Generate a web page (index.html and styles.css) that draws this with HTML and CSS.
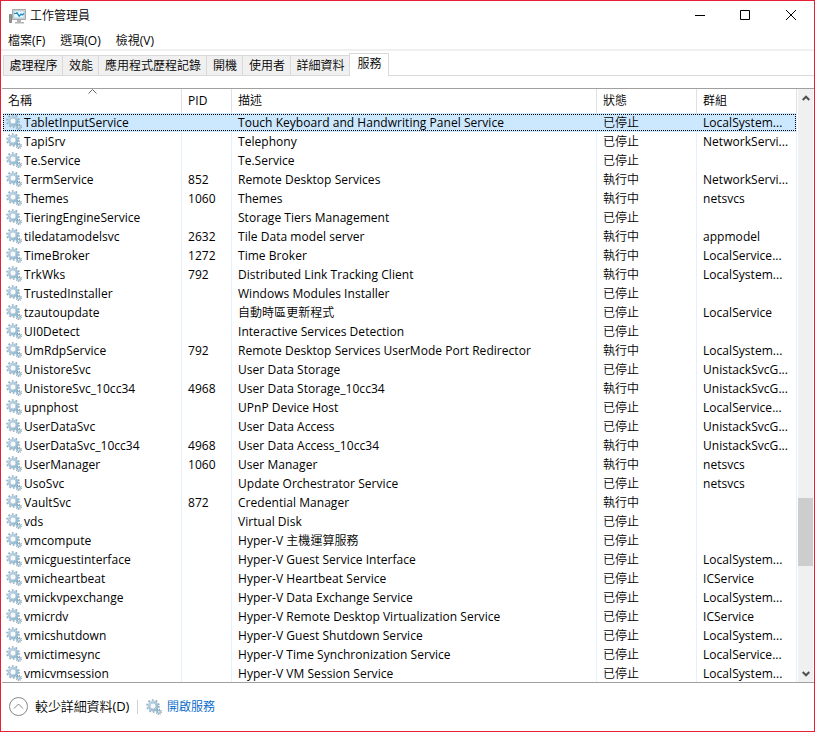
FILE: index.html
```
<!DOCTYPE html>
<html lang="zh-Hant">
<head>
<meta charset="utf-8">
<title>工作管理員</title>
<link rel="stylesheet" href="styles.css">
</head>
<body>
<svg class="defs" width="0" height="0">
  <defs>
    <linearGradient id="steel" x1="0" y1="0" x2="1" y2="1">
      <stop offset="0" stop-color="#bcd9ea"/><stop offset="1" stop-color="#8ab6d2"/>
    </linearGradient>
    <symbol id="gears" viewBox="0 0 16 16">
      <circle cx="7" cy="7" r="6" fill="none" stroke="#97adba" stroke-width="1.6" stroke-dasharray="1.800 1.970"/>
      <circle cx="7" cy="7" r="4.300" fill="none" stroke="url(#steel)" stroke-width="2.300"/>
      <circle cx="7" cy="7" r="3" fill="#f6fafc" stroke="#8ea9ba" stroke-width=".6"/>
      <circle cx="12.8" cy="12.8" r="2.6" fill="none" stroke="#8197a5" stroke-width="1.1" stroke-dasharray="1 1.040"/>
      <circle cx="12.8" cy="12.8" r="1.5" fill="#e6f1f7" stroke="#8fb5ca" stroke-width="1.200"/>
    </symbol>
  </defs>
</svg>
<div class="window">
  <header class="titlebar">
    <svg class="app-icon" width="17" height="15" viewBox="0 0 17 15">
      <path d="M.5 5.500h2v8h-2z" fill="#999" stroke="#888"/><path d="M1 7.500h1" stroke="#39c84a"/>
      <path d="M3.5.5h13v10h-13z" fill="#d3d3d3" stroke="#a9a9a9"/>
      <path d="M5 2h10v7H5z" fill="#eaf7fd" stroke="#9cc6dc" stroke-width=".6"/>
      <path d="M5 4.5h1.5L8 3.8l2.2 3.4L12 5l1.2 1L15 4.500" fill="none" stroke="#1687c4" stroke-width="1.2"/>
      <path d="M8 11h4v2H8zM6 13h9v1.500H6z" fill="#b4b4b4"/>
    </svg>
    <h1>工作管理員</h1>
    <div class="controls">
      <svg width="10" height="10" viewBox="0 0 10 10"><path d="M0 4.500h10"/></svg>
      <svg width="10" height="10" viewBox="0 0 10 10"><path d="M.5.5h9v9h-9z"/></svg>
      <svg width="10" height="10" viewBox="0 0 10 10"><path d="M0 0l10 10M10 0L0 10"/></svg>
    </div>
  </header>
  <nav class="menu"><span>檔案(F)</span><span>選項(O)</span><span>檢視(V)</span></nav>
  <div class="tabs">
    <span class="tab t4">處理程序</span><span class="tab t2">效能</span><span class="tab t8">應用程式歷程記錄</span><span class="tab t2">開機</span><span class="tab t3">使用者</span><span class="tab t4">詳細資料</span><span class="tab active">服務</span><span class="tab-rest"></span>
  </div>
  <main class="list">
    <div class="table">
      <div class="row head">
        <span class="c-name">名稱<svg class="sort" width="9" height="5" viewBox="0 0 9 5"><path d="M.5 4.500l4-4 4 4"/></svg></span><span>PID</span><span>描述</span><span>狀態</span><span>群組</span>
      </div>
      <div id="rows"></div>
    </div>
    <div class="scrollbar">
      <svg class="arrow" width="8" height="6" viewBox="0 0 8 6"><path d="M.7 5L4 1.700 7.300 5"/></svg>
      <div class="thumb"></div>
      <svg class="arrow" width="8" height="6" viewBox="0 0 8 6"><path d="M.7 1L4 4.300 7.300 1"/></svg>
    </div>
  </main>
  <footer>
    <svg class="less" width="20" height="20" viewBox="0 0 20 20"><circle cx="10.500" cy="9.500" r="9"/><path d="M6 11.500l4.500-4.500 4.500 4.500"/></svg>
    <span class="less-label">較少詳細資料(D)</span>
    <i class="divider"></i>
    <svg class="gear" width="16" height="16"><use href="#gears"/></svg>
    <a class="link">開啟服務</a>
  </footer>
</div>
<script src="rows.js"></script>
</body>
</html>
```
FILE: styles.css
```
* { box-sizing: border-box; }
body {
  margin: 0;
  font: 12px/18px "Open Sans", "Noto Sans CJK TC DemiLight", "Noto Sans CJK TC Light", "Noto Sans CJK TC", sans-serif;
  color: #000;
  background: #fff;
}
.defs { position: absolute; }
.window {
  width: 815px;
  height: 732px;
  border: 1px solid #e81f36;
  display: flex;
  flex-direction: column;
  overflow: hidden;
}
.titlebar { height: 29px; display: flex; align-items: center; padding-left: 8px; }
.titlebar h1 { margin: 0 0 0 4px; font-size: 12px; font-weight: 400; }
.app-icon { margin-top: 2px; }
.controls { margin-left: auto; display: flex; gap: 36px; padding-right: 18px; }
.controls svg { fill: none; stroke: #000; width: 10px; overflow: visible; }
.controls svg:first-child { margin-right: -1px; }
.controls svg:nth-child(2) { margin-top: -1px; }
.controls svg:nth-child(3) { margin-top: -1px; }
.menu {
  height: 21px;
  display: flex;
  gap: 15px;
  padding: 2px 0 0 7px;
  border-bottom: 2px solid #f0f0f0;
}
.menu span { white-space: nowrap; }
.tabs { height: 25px; display: flex; align-items: flex-end; padding-left: 2px; }
.tab {
  height: 21px;
  line-height: 20px;
  text-align: center;
  white-space: nowrap;
  background: #f0f0f0;
  border: 1px solid #d9d9d9;
  border-right: 0;
  padding-left: 1px;
  flex: none;
}
.t2 { width: 36px; }
.t3 { width: 48px; }
.t4 { width: 59px; }
.t8 { width: 108px; }
.active { height: 23px; width: 40px; background: #fff; border-right: 1px solid #d9d9d9; border-bottom: 0; }
.tab-rest { flex: 1; border-bottom: 1px solid #d9d9d9; }
.list {
  margin: 12px 0 0 1px;
  height: 595px;
  border: solid #a0a0a0;
  border-width: 1px 0;
  display: flex;
  overflow: hidden;
}
.table {
  width: 796px;
  flex: none;
  background: linear-gradient(#e5f0fc, #e5f0fc) 179px 0 / 1px 100% no-repeat,
    linear-gradient(#e5f0fc, #e5f0fc) 229px 0 / 1px 100% no-repeat,
    linear-gradient(#e5f0fc, #e5f0fc) 594px 0 / 1px 100% no-repeat,
    linear-gradient(#e5f0fc, #e5f0fc) 694px 0 / 1px 100% no-repeat,
    linear-gradient(#e5f0fc, #e5f0fc) 794px 0 / 1px 100% no-repeat;
}
.row {
  display: grid;
  grid-template-columns: 180px 50px 365px 100px 100px;
  height: 19px;
  line-height: 20px;
  letter-spacing: .04px;
}
.row span { padding-left: 6px; white-space: nowrap; overflow: hidden; }
.row .c-name { padding-left: 4px; display: flex; gap: 2px; }
.row .c-name b { font-weight: 400; }
.c-name .gear { flex: none; margin-top: 1px; }
.head { height: 24px; line-height: 24px; }
.head span { border-right: 1px solid #e0e0e0; }
.head .c-name { position: relative; padding-left: 6px; }
.sort { position: absolute; left: 86px; top: 0; fill: none; stroke: #666; }
.selected {
  width: 793px;
  margin-left: 1px;
  grid-template-columns: 179px 50px 365px 100px 99px;
  background: #cce8ff;
  position: relative;
}
.selected .c-name { padding-left: 3px; }
.selected::after {
  content: "";
  position: absolute;
  inset: 1px 0;
  background: repeating-linear-gradient(90deg, #000 0 1px, transparent 1px 2px) 0 0 / 100% 1px no-repeat,
    repeating-linear-gradient(90deg, #000 0 1px, transparent 1px 2px) 0 100% / 100% 1px no-repeat,
    repeating-linear-gradient(#000 0 1px, transparent 1px 2px) 0 0 / 1px 100% no-repeat,
    repeating-linear-gradient(#000 0 1px, transparent 1px 2px) 100% 0 / 1px 100% no-repeat;
}
.scrollbar {
  width: 15px;
  background: #f0f0f0;
  display: flex;
  flex-direction: column;
  align-items: center;
}
.arrow { fill: none; stroke: #505050; stroke-width: 2; margin: 6px 0 7px; flex: none; }
.thumb { width: 15px; height: 68px; margin-top: 390px; background: #cdcdcd; }
.thumb + .arrow { margin-top: auto; margin-bottom: 5px; }
footer { height: 47px; display: flex; align-items: center; padding-left: 7px; }
.less { fill: none; stroke: #868686; }
.less-label { margin: -1px 0 0 7px; font-size: 13px; letter-spacing: -.1px; width: 95px; white-space: nowrap; }
.divider { width: 1px; height: 14px; margin: 0 8px 0 7px; background: #d0d0d0; }
.link { margin-left: 5px; color: #0066cc; }
```
FILE: rows.js
```
const STOP = "已停止", RUN = "執行中";
const services = [
  ["TabletInputService", "", "Touch Keyboard and Handwriting Panel Service", STOP, "LocalSystem..."],
  ["TapiSrv", "", "Telephony", STOP, "NetworkServi..."],
  ["Te.Service", "", "Te.Service", STOP, ""],
  ["TermService", "852", "Remote Desktop Services", RUN, "NetworkServi..."],
  ["Themes", "1060", "Themes", RUN, "netsvcs"],
  ["TieringEngineService", "", "Storage Tiers Management", STOP, ""],
  ["tiledatamodelsvc", "2632", "Tile Data model server", RUN, "appmodel"],
  ["TimeBroker", "1272", "Time Broker", RUN, "LocalService..."],
  ["TrkWks", "792", "Distributed Link Tracking Client", RUN, "LocalSystem..."],
  ["TrustedInstaller", "", "Windows Modules Installer", STOP, ""],
  ["tzautoupdate", "", "自動時區更新程式", STOP, "LocalService"],
  ["UI0Detect", "", "Interactive Services Detection", STOP, ""],
  ["UmRdpService", "792", "Remote Desktop Services UserMode Port Redirector", RUN, "LocalSystem..."],
  ["UnistoreSvc", "", "User Data Storage", STOP, "UnistackSvcG..."],
  ["UnistoreSvc_10cc34", "4968", "User Data Storage_10cc34", RUN, "UnistackSvcG..."],
  ["upnphost", "", "UPnP Device Host", STOP, "LocalService..."],
  ["UserDataSvc", "", "User Data Access", STOP, "UnistackSvcG..."],
  ["UserDataSvc_10cc34", "4968", "User Data Access_10cc34", RUN, "UnistackSvcG..."],
  ["UserManager", "1060", "User Manager", RUN, "netsvcs"],
  ["UsoSvc", "", "Update Orchestrator Service", STOP, "netsvcs"],
  ["VaultSvc", "872", "Credential Manager", RUN, ""],
  ["vds", "", "Virtual Disk", STOP, ""],
  ["vmcompute", "", "Hyper-V 主機運算服務", STOP, ""],
  ["vmicguestinterface", "", "Hyper-V Guest Service Interface", STOP, "LocalSystem..."],
  ["vmicheartbeat", "", "Hyper-V Heartbeat Service", STOP, "ICService"],
  ["vmickvpexchange", "", "Hyper-V Data Exchange Service", STOP, "LocalSystem..."],
  ["vmicrdv", "", "Hyper-V Remote Desktop Virtualization Service", STOP, "ICService"],
  ["vmicshutdown", "", "Hyper-V Guest Shutdown Service", STOP, "LocalSystem..."],
  ["vmictimesync", "", "Hyper-V Time Synchronization Service", STOP, "LocalService..."],
  ["vmicvmsession", "", "Hyper-V VM Session Service", STOP, "LocalSystem..."]
];
const gear = '<svg class="gear" width="16" height="16"><use href="#gears"/></svg>';
document.getElementById("rows").innerHTML = services.map(([name, ...rest], i) =>
  `<div class="row${i ? "" : " selected"}"><span class="c-name">${gear}<b>${name}</b></span>` +
  rest.map(t => `<span>${t}</span>`).join("") + "</div>"
).join("");
```
